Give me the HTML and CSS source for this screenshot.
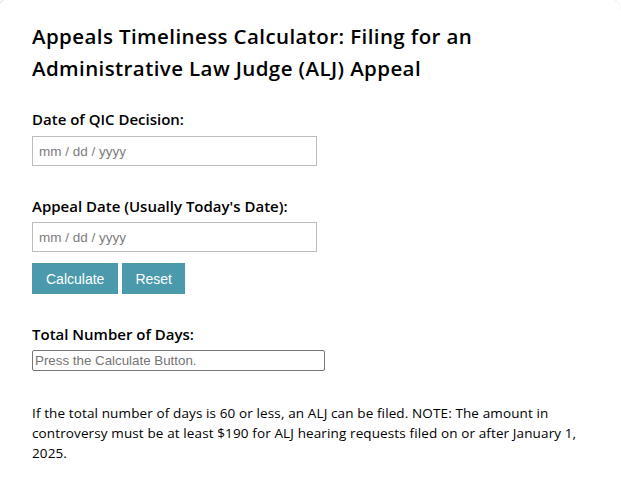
FILE: index.html
```html
<!DOCTYPE html>
<html lang="en">
<head>
<meta charset="utf-8">
<title>Appeals Timeliness Calculator</title>
<link rel="stylesheet" href="styles.css">
</head>
<body>
<div class="card">
  <h1 class="title">Appeals Timeliness Calculator: Filing for an Administrative Law Judge (ALJ) Appeal</h1>
  <form class="calc">
    <label class="label label-first" for="qic">Date of QIC Decision:</label>
    <input class="date" id="qic" type="text" placeholder="mm / dd / yyyy">
    <label class="label label-gap" for="appeal">Appeal Date (Usually Today's Date):</label>
    <input class="date" id="appeal" type="text" placeholder="mm / dd / yyyy">
    <div class="buttons">
      <button type="button" class="btn">Calculate</button>
      <button type="reset" class="btn">Reset</button>
    </div>
    <label class="label label-gap" for="total">Total Number of Days:</label>
    <input class="total" id="total" type="text" placeholder="Press the Calculate Button.">
  </form>
  <p class="note">If the total number of days is 60 or less, an ALJ can be filed. NOTE: The amount in controversy must be at least $190 for ALJ hearing requests filed on or after January 1, 2025.</p>
</div>
</body>
</html>
```
FILE: styles.css
```css
html, body {
  margin: 0;
  padding: 0;
  background: #ffffff;
}

body {
  font-family: "Open Sans", "DejaVu Sans", sans-serif;
  color: #000;
  overflow: hidden;
  height: 497px;
}

.card {
  box-sizing: border-box;
  margin: -3px 0 0 -3px;
  border-top: 1px solid #e2e2e2;
  border-left: 1px solid #e2e2e2;
  border-radius: 14px 14px 0 0;
  padding: 22px 30px 0 34px;
  height: 500px;
  background: #fff;
}

.title {
  margin: 0;
  font-size: 20.5px;
  letter-spacing: 0.4px;
  line-height: 32px;
  font-weight: 600;
  max-width: 480px;
}

.calc {
  display: flex;
  flex-direction: column;
  align-items: flex-start;
  margin: 0;
}

.label {
  display: block;
  font-size: 15px;
  line-height: 20px;
  font-weight: 600;
}

.label-first {
  margin-top: 25px;
  margin-bottom: 7px;
}

.label-gap {
  margin-top: 30px;
  margin-bottom: 6px;
}

.date {
  box-sizing: border-box;
  width: 285px;
  height: 30px;
  margin: 0;
  padding: 0 5px 0 6px;
  border: 1px solid #bcbcbc;
  border-radius: 0;
  font-family: "Liberation Sans", Arial, sans-serif;
  font-size: 13.5px;
  color: #000;
  outline: none;
}

.date::placeholder {
  color: #7d7d7d;
}

.total::placeholder {
  color: #757575;
}

.buttons {
  display: flex;
  gap: 4px;
  margin-top: 11px;
}

.btn {
  height: 31px;
  margin: 0;
  padding: 0 14px;
  border: none;
  border-radius: 0;
  background: #4a9aab;
  color: #fff;
  font-family: "Liberation Sans", Arial, sans-serif;
  font-size: 14px;
}

.btn + .btn {
  padding: 0 13px;
}

.total {
  box-sizing: border-box;
  width: 293px;
  height: 21px;
  margin: 0;
  padding: 1px 2px;
  border: 1px solid #767676;
  border-radius: 2px;
  font-family: "Liberation Sans", Arial, sans-serif;
  font-size: 13.33px;
  outline: none;
}

.note {
  margin: 32px 0 0 0;
  font-size: 13.5px;
  letter-spacing: 0.12px;
  line-height: 20px;
  max-width: 550px;
}
```
